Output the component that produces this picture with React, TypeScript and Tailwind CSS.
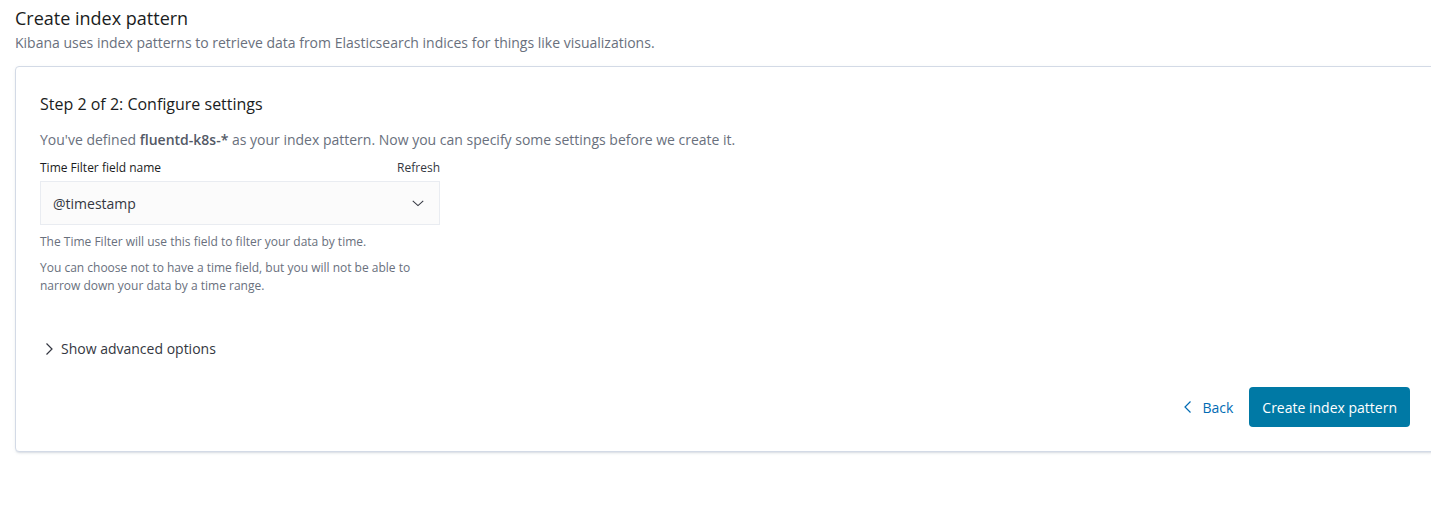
export default function App() {
  return (
    <div className="h-[526px] w-full overflow-hidden bg-white font-['Open_Sans',sans-serif] text-[#343741]">
      <div className="px-[15px] pt-[5px]">
        <h1 className="text-[18px] leading-[26px] text-[#1a1c21]">Create index pattern</h1>
        <p className="mt-[2px] text-[14px] leading-[20px] text-[#69707d]">
          Kibana uses index patterns to retrieve data from Elasticsearch indices for things like visualizations.
        </p>
      </div>

      <div className="ml-[15px] mt-[13px] w-[1420px] rounded-[4px] border border-[#d3dae6] bg-white px-[24px] pb-[24px] pt-[25px] shadow-[0_2px_2px_-1px_rgba(152,162,179,0.3),0_1px_5px_-2px_rgba(152,162,179,0.3)]">
        <h2 className="text-[16px] leading-[24px] text-[#1a1c21]">Step 2 of 2: Configure settings</h2>
        <p className="mt-[14px] text-[14px] leading-[20px] text-[#69707d]">
          You've defined <strong className="font-semibold text-[#535966]">fluentd-k8s-*</strong> as your index pattern. Now you can specify some settings before we create it.
        </p>

        <div className="mt-[9px] w-[400px]">
          <div className="flex items-center justify-between text-[12px] leading-[18px] text-[#1a1c21]">
            <span>Time Filter field name</span>
            <span className="text-[#343741]">Refresh</span>
          </div>
          <div className="mt-[4px] flex h-[44px] items-center justify-between border border-[#e9ecf1] bg-[#fbfbfb] pl-[12px] pr-[14px] text-[14px] text-[#343741]">
            <span>@timestamp</span>
            <svg width="14" height="14" viewBox="0 0 16 16" fill="none" stroke="#343741" strokeWidth="1.2">
              <path d="M2 5.5l6 5.5 6-5.5" />
            </svg>
          </div>
          <p className="mt-[8px] text-[12px] leading-[18px] text-[#69707d]">
            The Time Filter will use this field to filter your data by time.
          </p>
          <p className="mt-[8px] text-[12px] leading-[18px] text-[#69707d]">
            You can choose not to have a time field, but you will not be able to narrow down your data by a time range.
          </p>
        </div>

        <div className="mt-[44px] flex items-center gap-[7px] pl-[4px] text-[14px] leading-[20px] text-[#343741]">
          <svg width="10" height="16" viewBox="0 0 10 16" fill="none" stroke="#343741" strokeWidth="1.2">
            <path d="M2.5 2.5l5.5 5.5-5.5 5.5" />
          </svg>
          <span>Show advanced options</span>
        </div>

        <div className="mt-[28px] flex items-center justify-end gap-[8px]">
          <button className="flex h-[40px] items-center gap-[9px] px-[8px] text-[14px] text-[#006bb4]">
            <svg width="10" height="16" viewBox="0 0 10 16" fill="none" stroke="#006bb4" strokeWidth="1.2">
              <path d="M7.5 2.5L2 8l5.5 5.5" />
            </svg>
            <span>Back</span>
          </button>
          <button className="h-[40px] rounded-[4px] bg-[#0079a5] px-[13px] text-[14px] text-white">
            Create index pattern
          </button>
        </div>
      </div>
    </div>
  );
}
